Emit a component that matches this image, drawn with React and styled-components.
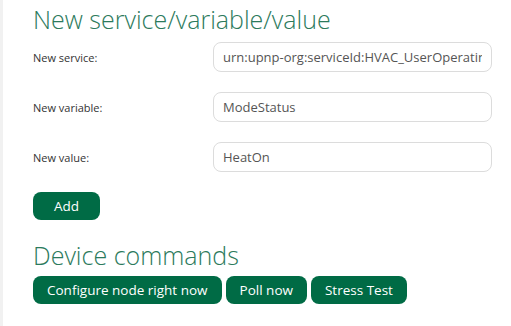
import React from "react";
import styled, { createGlobalStyle } from "styled-components";

const Global = createGlobalStyle`
  html, body { margin: 0; padding: 0; background: #fff; }
  body { font-family: "Open Sans", "Liberation Sans", sans-serif; }
`;

const Page = styled.div`
  display: flex;
  min-height: 326px;
`;

const Strip = styled.div`
  width: 3px;
  background: #f1f1f1;
  flex: none;
`;

const Content = styled.div`
  flex: 1;
  padding: 3px 19px 0 30px;
`;

const Heading = styled.h2`
  margin: 0;
  font-weight: 300;
  font-size: 25px;
  line-height: 32px;
  color: #2c7a5c;
`;

const Form = styled.div`
  display: flex;
  flex-direction: column;
  gap: 20px;
  margin-top: 7px;
`;

const Row = styled.div`
  display: grid;
  grid-template-columns: 180px 1fr;
  align-items: center;
`;

const Label = styled.label`
  font-size: 11px;
  color: #333;
`;

const Input = styled.input`
  box-sizing: border-box;
  height: 30px;
  width: 100%;
  border: 1px solid #dcdcdc;
  border-radius: 8px;
  padding: 0 9px;
  font-family: "Open Sans", "Liberation Sans", sans-serif;
  font-size: 13px;
  color: #555;
  background: #fff;
  outline: none;
`;

const Button = styled.button`
  box-sizing: border-box;
  height: 28px;
  padding: 0 ${(p) => p.$pad || 14}px;
  border: none;
  border-radius: 8px;
  background: #006b45;
  color: #fff;
  font-family: "Open Sans", "Liberation Sans", sans-serif;
  font-size: 13.5px;
  cursor: pointer;
`;

const AddWrap = styled.div`
  margin-top: 20px;
`;

const Commands = styled.div`
  margin-top: 19px;
`;

const ButtonRow = styled.div`
  display: flex;
  gap: 4px;
  margin-top: 5px;
`;

export default function App() {
  return (
    <>
      <Global />
      <Page>
        <Strip />
        <Content>
          <Heading>New service/variable/value</Heading>
          <Form>
            <Row>
              <Label>New service:</Label>
              <Input defaultValue="urn:upnp-org:serviceId:HVAC_UserOperatingMode1" />
            </Row>
            <Row>
              <Label>New variable:</Label>
              <Input defaultValue="ModeStatus" />
            </Row>
            <Row>
              <Label>New value:</Label>
              <Input defaultValue="HeatOn" />
            </Row>
          </Form>
          <AddWrap>
            <Button $pad={21}>Add</Button>
          </AddWrap>
          <Commands>
            <Heading>Device commands</Heading>
            <ButtonRow>
              <Button>Configure node right now</Button>
              <Button>Poll now</Button>
              <Button>Stress Test</Button>
            </ButtonRow>
          </Commands>
        </Content>
      </Page>
    </>
  );
}
